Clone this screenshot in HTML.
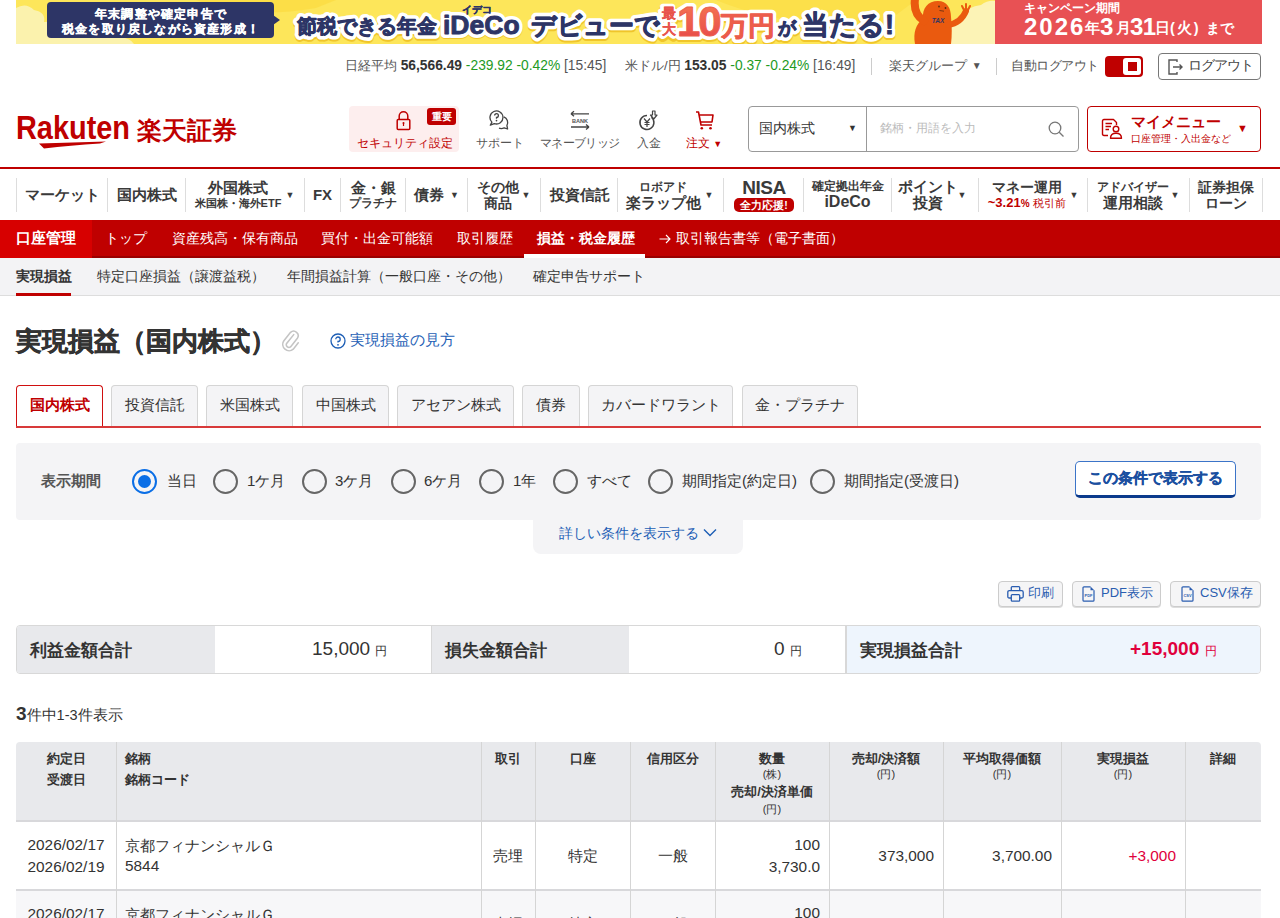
<!DOCTYPE html>
<html lang="ja"><head><meta charset="utf-8">
<style>
*{box-sizing:border-box;margin:0;padding:0}
html,body{width:1280px;height:918px;overflow:hidden;background:#fff}
body{font-family:"Liberation Sans",sans-serif;color:#333;position:relative}
.a{position:absolute;white-space:nowrap}
/* banner */
#banner{left:16px;top:0;width:979px;height:44px;background:#fde54b;overflow:hidden}
#campaign{left:995px;top:0;width:267px;height:44px;background:#e85154;color:#fff}
/* top row */
.tr{font-size:13px;color:#555;top:57px;line-height:18px}
.n{font-size:13.8px}
.grn{color:#239a1f}
.sep{background:#ccc;width:1px}
/* header */
.hicon{top:106px;height:46px;text-align:center;font-size:12px;color:#555}
#nav .it{position:absolute;top:178px;height:34px;display:flex;align-items:center;justify-content:center;text-align:center;color:#3a3a3a;font-weight:bold;font-size:15px;line-height:16px}
#nav .s{position:absolute;top:178px;height:34px;width:1px;background:#ddd}
.tri{font-size:9px;margin-left:6px;font-weight:normal}
.rb{top:220px;height:38px;background:#bf0000;left:0;width:1280px}
.rbt{top:219px;height:38px;line-height:38px;color:#fff;font-size:14px}
.sub{top:257px;height:38px;line-height:38px;font-size:14px;color:#333}
.tab{top:385px;height:41px;border:1px solid #d5d5d5;border-bottom:none;border-radius:4px 4px 0 0;background:#f4f4f6;font-size:15px;line-height:38px;text-align:center;color:#333}
.radio{width:25px;height:25px;border:2.5px solid #666;border-radius:50%;top:469px}
.rl{top:472px;font-size:15px;line-height:18px;color:#333}
.btn{top:581px;height:26px;border:1px solid #ccc;border-radius:4px;background:#f5f5f6;color:#2a5db0;font-size:13px;line-height:24px;box-shadow:0 1px 0 #ddd}
.th{font-size:13px;font-weight:bold;color:#333;line-height:21px;text-align:center}
.td{font-size:15.4px;color:#333;line-height:21px}
.vl{width:1px;background:#d5d5d5}
</style></head><body>

<!-- BANNER -->
<svg class="a" style="left:16px;top:0" width="979" height="44" viewBox="0 0 979 44">
  <defs>
    <linearGradient id="rg" x1="0" y1="0" x2="0" y2="1"><stop offset="0" stop-color="#f77a52"/><stop offset="1" stop-color="#e5454a"/></linearGradient>
  </defs>
  <rect width="979" height="44" fill="#fde65a"/>
  <path d="M180 0 Q230 20 300 8 L320 0 Z" fill="#fcd93a" opacity="0.6"/>
  <path d="M700 0 Q760 25 860 30 L900 0 Z" fill="#fcd93a" opacity="0.5"/>
  <path d="M0 8 Q10 2 18 10 Q30 12 28 22 Q50 20 60 30 Q90 26 100 36 Q115 38 118 44 L0 44 Z" fill="#fbf2ad"/>
  <path d="M925 44 Q930 20 945 17 Q952 6 965 5 Q972 0 979 1 L979 44 Z" fill="#fcf3b6"/>
  <rect x="31" y="2" width="227" height="36" rx="4" fill="#2d3566"/>
  <path d="M257 15 L264 20 L257 25 Z" fill="#2d3566"/>
  <g font-family="Liberation Sans" font-weight="bold" fill="#fff" stroke="#fff" stroke-width="0.3" text-anchor="middle" font-size="12" letter-spacing="1.2">
    <text x="145" y="17.5">年末調整や確定申告で</text>
    <text x="145" y="33">税金を取り戻しながら資産形成！</text>
  </g>
  <g font-family="Liberation Sans" font-weight="bold" stroke-linejoin="round">
<text x="281" y="34.8" font-size="19.5" fill="#f0c52a" stroke="#f0c52a" stroke-width="8">節税できる年金</text>
<text x="427" y="35.3" font-size="26.5" fill="#f0c52a" stroke="#f0c52a" stroke-width="8">iDeCo</text>
<text x="515" y="35.8" font-size="25" fill="#f0c52a" stroke="#f0c52a" stroke-width="8">デビューで</text>
<text x="645" y="19.8" font-size="13.5" fill="#f0c52a" stroke="#f0c52a" stroke-width="8">最</text>
<text x="645" y="35.8" font-size="13.5" fill="#f0c52a" stroke="#f0c52a" stroke-width="8">大</text>
<text x="661" y="37.8" font-size="42" fill="#f0c52a" stroke="#f0c52a" stroke-width="8" letter-spacing="-2">10</text>
<text x="705" y="36.8" font-size="27" fill="#f0c52a" stroke="#f0c52a" stroke-width="8">万円</text>
<text x="762" y="35.8" font-size="18" fill="#f0c52a" stroke="#f0c52a" stroke-width="8">が</text>
<text x="786" y="35.8" font-size="27" fill="#f0c52a" stroke="#f0c52a" stroke-width="8">当たる!</text>
<text x="281" y="33" font-size="19.5" fill="#fff" stroke="#fff" stroke-width="8">節税できる年金</text>
<text x="427" y="33.5" font-size="26.5" fill="#fff" stroke="#fff" stroke-width="8">iDeCo</text>
<text x="515" y="34" font-size="25" fill="#fff" stroke="#fff" stroke-width="8">デビューで</text>
<text x="645" y="18" font-size="13.5" fill="#fff" stroke="#fff" stroke-width="6">最</text>
<text x="645" y="34" font-size="13.5" fill="#fff" stroke="#fff" stroke-width="6">大</text>
<text x="661" y="36" font-size="42" fill="#fff" stroke="#fff" stroke-width="8" letter-spacing="-2">10</text>
<text x="705" y="35" font-size="27" fill="#fff" stroke="#fff" stroke-width="8">万円</text>
<text x="762" y="34" font-size="18" fill="#fff" stroke="#fff" stroke-width="8">が</text>
<text x="786" y="34" font-size="27" fill="#fff" stroke="#fff" stroke-width="8">当たる!</text>
<text x="281" y="33" font-size="19.5" fill="#2d3566" stroke="#2d3566" stroke-width="0.9">節税できる年金</text>
<text x="427" y="33.5" font-size="26.5" fill="#2d3566" stroke="#2d3566" stroke-width="0.9">iDeCo</text>
<text x="515" y="34" font-size="25" fill="#2d3566" stroke="#2d3566" stroke-width="0.9">デビューで</text>
<text x="645.5" y="18" font-size="13.5" fill="#e8544c" stroke="#e8544c" stroke-width="0.3">最</text>
<text x="645.5" y="34" font-size="13.5" fill="#e8544c" stroke="#e8544c" stroke-width="0.3">大</text>
<text x="661" y="36" font-size="42" fill="url(#rg)" stroke="#ec5d4c" stroke-width="0.9" letter-spacing="-2">10</text>
<text x="705" y="35" font-size="27" fill="url(#rg)" stroke="#ec5d4c" stroke-width="0.9">万円</text>
<text x="762" y="34" font-size="18" fill="#2d3566" stroke="#2d3566" stroke-width="0.9">が</text>
<text x="786" y="34" font-size="27" fill="#2d3566" stroke="#2d3566" stroke-width="0.9">当たる!</text>
<text x="446" y="12.5" font-size="10" fill="#2d3566" stroke="#2d3566" stroke-width="0.4">イデコ</text>
</g>
  <path d="M899 44 C897 32 900 24 907 19 C906 8 912 1 922 1 C931 1 935 8 935 17 C936 26 936 36 935 44 Z" fill="#ea5a0f"/>
  <path d="M908 21 Q897 14 899 -1" fill="none" stroke="#ea5a0f" stroke-width="8" stroke-linecap="round"/>
  <path d="M932 25 Q945 23 950 11" fill="none" stroke="#ea5a0f" stroke-width="6" stroke-linecap="round"/>
  <path d="M948 10 L946 6 M950 9 L950 4 M952 10 L954 6" fill="none" stroke="#ea5a0f" stroke-width="2" stroke-linecap="round"/>
  <circle cx="923" cy="6.5" r="0.9" fill="#5a2a10"/><circle cx="929.5" cy="8" r="0.9" fill="#5a2a10"/><path d="M923.5 10.5 L928 11.2" stroke="#5a2a10" stroke-width="0.8"/>
  <text x="922" y="22.5" font-family="Liberation Sans" font-weight="bold" font-style="italic" font-size="6.5" fill="#2d3566" text-anchor="middle">TAX</text>
</svg>
<div class="a" id="campaign">
  <div class="a" style="left:29px;top:1px;font-size:12px;font-weight:bold;line-height:14px">キャンペーン期間</div>
  <div class="a" style="left:29px;top:14px;font-size:24px;font-weight:bold;line-height:26px;letter-spacing:2px">2026</div>
  <div class="a" style="left:90px;top:19px;font-size:14.5px;font-weight:bold;line-height:18px">年</div>
  <div class="a" style="left:105px;top:14px;font-size:24px;font-weight:bold;line-height:26px">3</div>
  <div class="a" style="left:121px;top:19px;font-size:14.5px;font-weight:bold;line-height:18px">月</div>
  <div class="a" style="left:135px;top:14px;font-size:24px;font-weight:bold;line-height:26px;letter-spacing:-0.5px">31</div>
  <div class="a" style="left:160px;top:19px;font-size:14.5px;font-weight:bold;line-height:18px">日</div>
  <div class="a" style="left:175px;top:19px;font-size:14.5px;font-weight:bold;line-height:18px;letter-spacing:2px">(火)</div>
  <div class="a" style="left:211px;top:19px;font-size:14px;font-weight:bold;line-height:18px">まで</div>
</div>

<!-- TOP ROW -->
<div class="a tr" style="left:345px">日経平均 <span class="n"><b style="color:#333">56,566.49</b> <span class="grn">-239.92 -0.42%</span> [15:45]</span></div>
<div class="a tr" style="left:625px">米ドル/円 <span class="n"><b style="color:#333">153.05</b> <span class="grn">-0.37 -0.24%</span> [16:49]</span></div>
<div class="a sep" style="left:871px;top:58px;height:17px"></div>
<div class="a tr" style="left:889px">楽天グループ <span style="font-size:10px;margin-left:1px;vertical-align:1px">▼</span></div>
<div class="a sep" style="left:996px;top:58px;height:17px"></div>
<div class="a tr" style="left:1011px;letter-spacing:-0.5px">自動ログアウト</div>
<div class="a" style="left:1105px;top:56px;width:38px;height:21px;background:#bf0000;border-radius:4px"></div>
<div class="a" style="left:1123px;top:58px;width:18px;height:17px;background:#fff;border-radius:3px"></div>
<div class="a" style="left:1128px;top:62px;width:9px;height:9px;background:#bf0000"></div>
<div class="a" style="left:1158px;top:53px;width:103px;height:27px;border:1px solid #777;border-radius:4px"></div>
<svg class="a" style="left:1167px;top:58px" width="18" height="18" viewBox="0 0 18 18"><path d="M10 4 V2 H2 V16 H10 V14" fill="none" stroke="#555" stroke-width="1.4"/><path d="M6 9 H15 M12.5 6.5 L15 9 L12.5 11.5" fill="none" stroke="#555" stroke-width="1.4"/></svg>
<div class="a tr" style="left:1188px;color:#444;font-size:13.5px;letter-spacing:-1px">ログアウト</div>


<!-- HEADER -->
<svg class="a" style="left:0;top:100px" width="250" height="55" viewBox="0 0 250 55"><text x="16" y="39" font-family="Liberation Sans" font-weight="bold" font-size="33" fill="#bf0000" textLength="114" lengthAdjust="spacingAndGlyphs">Rakuten</text><path d="M39 43.5 L106 41.5 L100 43.5 Q70 45.5 44 48.5 Z" fill="#bf0000"/><text x="137" y="38.5" font-family="Liberation Sans" font-weight="bold" font-size="25" fill="#bf0000">楽天証券</text></svg>
<div class="a" style="left:349px;top:106px;width:110px;height:46px;background:#fdeeee;border-radius:4px"></div>
<div class="a" style="left:427px;top:108px;width:29px;height:17px;background:#bf0000;border-radius:3px;color:#fff;font-size:10px;font-weight:bold;line-height:17px;text-align:center">重要</div>
<svg class="a" style="left:396px;top:110px" width="16" height="21" viewBox="0 0 16 21"><path d="M3.2 9.5 V6 A4.3 4.3 0 0 1 11.8 6 V9.5" fill="none" stroke="#bf0000" stroke-width="1.5"/><rect x="1.2" y="9.6" width="12.6" height="9.8" rx="1" fill="none" stroke="#bf0000" stroke-width="1.5"/><circle cx="7.5" cy="13" r="1" fill="#bf0000"/><path d="M7.5 13 V16" stroke="#bf0000" stroke-width="1.2"/></svg>
<div class="a" style="left:357px;top:136px;font-size:12px;color:#bf0000;line-height:14px">セキュリティ設定</div>

<svg class="a" style="left:488px;top:110px" width="22" height="21" viewBox="0 0 22 21"><path d="M3.9 12.1 A6.5 6.5 0 1 1 6.3 13.6 L2.3 15.2 Z" fill="none" stroke="#444" stroke-width="1.3" stroke-linejoin="round"/><path d="M6.6 5.6 A1.9 1.9 0 1 1 8.5 7.5 V8.8" fill="none" stroke="#444" stroke-width="1.3"/><circle cx="8.5" cy="10.6" r="0.85" fill="#444"/><path d="M15.8 6.9 A6 6 0 0 1 18.9 15.5 L19.6 19 L16.2 17.8 A6 6 0 0 1 11 18.2" fill="none" stroke="#444" stroke-width="1.3" stroke-linejoin="round"/></svg>
<div class="a" style="left:476px;top:136px;font-size:12px;color:#555;line-height:14px">サポート</div>

<svg class="a" style="left:569px;top:110px" width="22" height="20" viewBox="0 0 22 20"><path d="M2 3.8 H20 M2 3.8 L5 1.3 M2 3.8 L5 6.3 M2 17 H20 M20 17 L17 14.5 M20 17 L17 19.5" fill="none" stroke="#444" stroke-width="1.3"/><text x="11" y="12.8" font-size="5.6" font-weight="bold" text-anchor="middle" fill="#555" font-family="Liberation Sans">BANK</text></svg>
<div class="a" style="left:540px;top:136px;font-size:12px;color:#555;line-height:14px;letter-spacing:-0.7px">マネーブリッジ</div>

<svg class="a" style="left:638px;top:110px" width="22" height="22" viewBox="0 0 22 22"><path d="M13.5 7.2 A7 7 0 1 1 9 5.5" fill="none" stroke="#444" stroke-width="1.5"/><path d="M6 8.5 L9 12 L12 8.5 M9 12 V17 M6.5 12.5 H11.5 M6.5 14.5 H11.5" fill="none" stroke="#444" stroke-width="1.2"/><path d="M14.5 1 H17 V5 H19 L15.75 9 L12.5 5 H14.5 Z" fill="none" stroke="#444" stroke-width="1.2" stroke-linejoin="round"/></svg>
<div class="a" style="left:637px;top:136px;font-size:12px;color:#555;line-height:14px">入金</div>

<svg class="a" style="left:695px;top:110px" width="20" height="21" viewBox="0 0 20 21"><path d="M1 2 H3.5 L6 15 H17" fill="none" stroke="#bf0000" stroke-width="1.6" stroke-linejoin="round"/><path d="M4.3 5 H18 L17 12 H5.5" fill="none" stroke="#bf0000" stroke-width="1.6" stroke-linejoin="round"/><circle cx="6.8" cy="18.3" r="1.3" fill="#bf0000"/><circle cx="15.5" cy="18.3" r="1.3" fill="#bf0000"/></svg>
<div class="a" style="left:686px;top:136px;font-size:12px;color:#bf0000;line-height:14px">注文 <span style="font-size:9px">▼</span></div>

<div class="a" style="left:748px;top:106px;width:331px;height:46px;border:1px solid #999;border-radius:4px"></div>
<div class="a" style="left:866px;top:107px;width:1px;height:44px;background:#999"></div>
<div class="a" style="left:759px;top:120px;font-size:14px;color:#333;line-height:17px">国内株式</div>
<div class="a" style="left:848px;top:121px;font-size:9px;color:#333;line-height:15px">▼</div>
<div class="a" style="left:880px;top:121px;font-size:12px;color:#bbb;line-height:15px">銘柄・用語を入力</div>
<svg class="a" style="left:1048px;top:121px" width="17" height="17" viewBox="0 0 17 17"><circle cx="7" cy="7" r="5.8" fill="none" stroke="#777" stroke-width="1.3"/><path d="M11.2 11.2 L15.5 15.5" stroke="#777" stroke-width="1.3"/></svg>

<div class="a" style="left:1087px;top:106px;width:174px;height:46px;border:1.5px solid #bf0000;border-radius:4px"></div>
<svg class="a" style="left:1101px;top:118px" width="24" height="22" viewBox="0 0 24 22"><path d="M7 17.5 H3 Q1.5 17.5 1.5 16 V3 Q1.5 1.5 3 1.5 H12.5 L15.5 4.5 V7" fill="none" stroke="#bf0000" stroke-width="1.4" stroke-linejoin="round"/><path d="M4.5 5.5 H11 M4.5 8.5 H10 M4.5 11.5 H8" stroke="#bf0000" stroke-width="1.4"/><circle cx="15" cy="11" r="2.8" fill="none" stroke="#bf0000" stroke-width="1.4"/><path d="M9.5 20.3 Q9.5 15.2 15 15.2 Q20.5 15.2 20.5 20.3 Z" fill="none" stroke="#bf0000" stroke-width="1.4" stroke-linejoin="round"/></svg>
<div class="a" style="left:1131px;top:113px;font-size:15px;font-weight:bold;color:#bf0000;line-height:18px">マイメニュー</div>
<div class="a" style="left:1131px;top:132px;font-size:10.2px;color:#bf0000;line-height:13px">口座管理・入出金など</div>
<div class="a" style="left:1237px;top:122px;font-size:11px;color:#bf0000;line-height:13px">▼</div>

<div class="a" style="left:0;top:167px;width:1280px;height:2px;background:#bf0000"></div>


<!-- NAV -->
<div id="nav">
<div class="s" style="left:16px"></div>
<div class="it" style="left:17px;width:90px">マーケット</div>
<div class="s" style="left:107px"></div>
<div class="it" style="left:108px;width:77px">国内株式</div>
<div class="s" style="left:185px"></div>
<div class="it" style="left:186px;width:104px;flex-direction:column;font-size:14.5px;line-height:16px">外国株式<span style="font-size:11px;line-height:15px">米国株・海外ETF</span></div><div class="it" style="left:284px;width:12px;font-size:9px;font-weight:normal">▼</div>
<div class="s" style="left:304px"></div>
<div class="it" style="left:305px;width:35px">FX</div>
<div class="s" style="left:340px"></div>
<div class="it" style="left:341px;width:64px;flex-direction:column;font-size:14.5px;line-height:16px">金・銀<span style="font-size:12px;line-height:15px">プラチナ</span></div>
<div class="s" style="left:405px"></div>
<div class="it" style="left:406px;width:61px">債券<span class="tri">▼</span></div>
<div class="s" style="left:467px"></div>
<div class="it" style="left:468px;width:60px;flex-direction:column;font-size:14px">その他<span>商品</span></div><div class="it" style="left:520px;width:12px;font-size:9px;font-weight:normal">▼</div>
<div class="s" style="left:540px"></div>
<div class="it" style="left:541px;width:77px">投資信託</div>
<div class="s" style="left:617px"></div>
<div class="it" style="left:618px;width:90px;flex-direction:column;font-size:15px;line-height:17px"><span style="font-size:12px;line-height:14px">ロボアド</span>楽ラップ他</div><div class="it" style="left:703px;width:12px;font-size:9px;font-weight:normal">▼</div>
<div class="s" style="left:723px"></div>
<div class="it" style="left:724px;width:80px;flex-direction:column"><span style="font-size:19px;line-height:19px;letter-spacing:-0.5px">NISA</span><span style="font-size:10.5px;line-height:14px;background:#bf0000;color:#fff;border-radius:5px;padding:0 6px;margin-top:1px">全力応援!</span></div>
<div class="s" style="left:803px"></div>
<div class="it" style="left:804px;width:87px;flex-direction:column;font-size:16px;line-height:18px"><span style="font-size:12px;line-height:14px">確定拠出年金</span>iDeCo</div>
<div class="s" style="left:891px"></div>
<div class="it" style="left:892px;width:72px;flex-direction:column;font-size:15px;line-height:16px">ポイント<span>投資</span></div><div class="it" style="left:956px;width:12px;font-size:9px;font-weight:normal">▼</div>
<div class="s" style="left:978px"></div>
<div class="it" style="left:979px;width:96px;flex-direction:column;font-size:14px;line-height:16px">マネー運用<span style="color:#bf0000;font-size:13px;line-height:16px">~3.21<span style="font-size:10px">%</span> <span style="font-size:11px;font-weight:normal">税引前</span></span></div><div class="it" style="left:1068px;width:12px;font-size:9px;font-weight:normal">▼</div>
<div class="s" style="left:1087px"></div>
<div class="it" style="left:1088px;width:90px;flex-direction:column;font-size:15px;line-height:17px"><span style="font-size:12px;line-height:14px">アドバイザー</span>運用相談</div><div class="it" style="left:1169px;width:12px;font-size:9px;font-weight:normal">▼</div>
<div class="s" style="left:1189px"></div>
<div class="it" style="left:1190px;width:72px;flex-direction:column;font-size:14px;line-height:16px">証券担保<span>ローン</span></div>
<div class="s" style="left:1262px"></div>
</div>

<!-- RED BAR -->
<div class="a rb"></div>
<div class="a" style="left:92px;top:256px;width:1188px;height:2px;background:#9a0000"></div>
<div class="a" style="left:0;top:220px;width:92px;height:38px;background:#d70000"></div>
<div class="a rbt" style="left:16px;font-weight:bold;font-size:15px">口座管理</div>
<div class="a rbt" style="left:105px">トップ</div>
<div class="a rbt" style="left:172px">資産残高・保有商品</div>
<div class="a rbt" style="left:321px">買付・出金可能額</div>
<div class="a rbt" style="left:457px">取引履歴</div>
<div class="a rbt" style="left:537px;font-weight:bold">損益・税金履歴</div>
<div class="a" style="left:524px;top:254px;width:121px;height:4px;background:#fff"></div>
<svg class="a" style="left:659px;top:234px" width="12" height="10" viewBox="0 0 12 10"><path d="M0.5 5 H11 M7 1 L11 5 L7 9" fill="none" stroke="#fff" stroke-width="1.1"/></svg>
<div class="a rbt" style="left:676px">取引報告書等（電子書面）</div>

<!-- SUB NAV -->
<div class="a" style="left:0;top:258px;width:1280px;height:38px;background:#f3f3f5;border-bottom:1px solid #ddd"></div>
<div class="a sub" style="left:16px;font-weight:bold">実現損益</div>
<div class="a" style="left:16px;top:293px;width:55px;height:3px;background:#bf0000"></div>
<div class="a sub" style="left:97px">特定口座損益（譲渡益税）</div>
<div class="a sub" style="left:287px">年間損益計算（一般口座・その他）</div>
<div class="a sub" style="left:533px">確定申告サポート</div>


<!-- TITLE -->
<div class="a" style="left:16px;top:325px;font-size:26px;font-weight:bold;color:#333;line-height:32px;-webkit-text-stroke:0.5px #333">実現損益（国内株式）</div>
<svg class="a" style="left:281px;top:330px" width="20" height="22" viewBox="0 0 22 24"><path d="M14 5 L6 15 A3 3 0 0 0 10.5 18.5 L18 9 A5 5 0 0 0 10.5 2.5 L3 12 A7 7 0 0 0 13.5 21 L19 14" fill="none" stroke="#c4c4c4" stroke-width="1.7" stroke-linecap="round"/></svg>
<svg class="a" style="left:330px;top:333px" width="16" height="16" viewBox="0 0 16 16"><circle cx="8" cy="8" r="7" fill="none" stroke="#1d5eb5" stroke-width="1.3"/><path d="M5.8 6.2 A2.2 2.2 0 1 1 8 8.4 V9.6" fill="none" stroke="#1d5eb5" stroke-width="1.3"/><circle cx="8" cy="11.8" r="0.9" fill="#1d5eb5"/></svg>
<div class="a" style="left:350px;top:331px;font-size:15px;color:#1d5eb5;line-height:18px">実現損益の見方</div>

<!-- TABS -->
<div class="a tab" style="left:16px;width:87px;background:#fff;border:1px solid #d01010;border-bottom:none;color:#bf0000;font-weight:bold;height:41px">国内株式</div>
<div class="a tab" style="left:111px;width:87px">投資信託</div>
<div class="a tab" style="left:206px;width:87px">米国株式</div>
<div class="a tab" style="left:302px;width:87px">中国株式</div>
<div class="a tab" style="left:397px;width:117px">アセアン株式</div>
<div class="a tab" style="left:522px;width:58px">債券</div>
<div class="a tab" style="left:588px;width:145px">カバードワラント</div>
<div class="a tab" style="left:742px;width:116px">金・プラチナ</div>
<div class="a" style="left:16px;top:426px;width:1245px;height:1.5px;background:#d83a3a;z-index:1"></div>

<!-- FILTER -->
<div class="a" style="left:16px;top:443px;width:1245px;height:77px;background:#f4f4f6;border-radius:4px"></div>
<div class="a" style="left:533px;top:519px;width:210px;height:35px;background:#f4f4f6;border-radius:0 0 8px 8px"></div>
<div class="a" style="left:41px;top:473px;font-size:14.6px;font-weight:bold;color:#555;line-height:17px">表示期間</div>
<div class="a radio" style="left:132px;border-color:#0a6ee6"><div style="position:absolute;left:3.5px;top:3.5px;width:13px;height:13px;border-radius:50%;background:#0a6ee6"></div></div>
<div class="a rl" style="left:167px">当日</div>
<div class="a radio" style="left:213px"></div>
<div class="a rl" style="left:247px">1ケ月</div>
<div class="a radio" style="left:302px"></div>
<div class="a rl" style="left:335px">3ケ月</div>
<div class="a radio" style="left:391px"></div>
<div class="a rl" style="left:424px">6ケ月</div>
<div class="a radio" style="left:479px"></div>
<div class="a rl" style="left:513px">1年</div>
<div class="a radio" style="left:553px"></div>
<div class="a rl" style="left:587px">すべて</div>
<div class="a radio" style="left:648px"></div>
<div class="a rl" style="left:682px">期間指定(約定日)</div>
<div class="a radio" style="left:810px"></div>
<div class="a rl" style="left:844px">期間指定(受渡日)</div>
<div class="a" style="left:1075px;top:461px;width:161px;height:37px;background:#fff;border:1.5px solid #3b74c8;border-bottom:3px solid #0b3a8c;border-radius:5px;color:#1a4fa0;font-weight:bold;font-size:15px;line-height:31px;text-align:center;-webkit-text-stroke:0.3px #1a4fa0">この条件で表示する</div>
<div class="a" style="left:559px;top:525px;font-size:14px;color:#1d5eb5;line-height:17px">詳しい条件を表示する</div>
<svg class="a" style="left:703px;top:528px" width="14" height="9" viewBox="0 0 14 9"><path d="M1 1.5 L7 7.5 L13 1.5" fill="none" stroke="#1d5eb5" stroke-width="1.4"/></svg>

<!-- BUTTONS -->
<div class="a btn" style="left:998px;width:65px"></div>
<svg class="a" style="left:1007px;top:586px" width="17" height="16" viewBox="0 0 17 16"><path d="M4.3 4.5 V1.6 Q4.3 0.7 5.2 0.7 H11.8 Q12.7 0.7 12.7 1.6 V4.5" fill="none" stroke="#2a5db0" stroke-width="1.3"/><path d="M4 12 H2.3 Q0.8 12 0.8 10.5 V6.2 Q0.8 4.7 2.3 4.7 H14.7 Q16.2 4.7 16.2 6.2 V10.5 Q16.2 12 14.7 12 H13" fill="none" stroke="#2a5db0" stroke-width="1.3"/><rect x="4.3" y="8.6" width="8.4" height="6.6" rx="1" fill="none" stroke="#2a5db0" stroke-width="1.3"/></svg>
<div class="a" style="left:1028px;top:585px;font-size:13px;color:#2a5db0;line-height:16px">印刷</div>
<div class="a btn" style="left:1072px;width:89px"></div>
<svg class="a" style="left:1082px;top:586px" width="13" height="16" viewBox="0 0 13 16"><path d="M8.5 0.8 H2 Q1 0.8 1 1.8 V14.2 Q1 15.2 2 15.2 H11 Q12 15.2 12 14.2 V4.3" fill="none" stroke="#2a5db0" stroke-width="1.2"/><path d="M8.5 0.5 L12.3 4.3 H8.5 Z" fill="#2a5db0"/><text x="6.5" y="10.8" font-size="4" font-weight="bold" text-anchor="middle" fill="#2a5db0" font-family="Liberation Sans">PDF</text></svg>
<div class="a" style="left:1101px;top:585px;font-size:13px;color:#2a5db0;line-height:16px">PDF表示</div>
<div class="a btn" style="left:1170px;width:91px"></div>
<svg class="a" style="left:1181px;top:586px" width="13" height="16" viewBox="0 0 13 16"><path d="M8.5 0.8 H2 Q1 0.8 1 1.8 V14.2 Q1 15.2 2 15.2 H11 Q12 15.2 12 14.2 V4.3" fill="none" stroke="#2a5db0" stroke-width="1.2"/><path d="M8.5 0.5 L12.3 4.3 H8.5 Z" fill="#2a5db0"/><text x="6.5" y="10.8" font-size="4" font-weight="bold" text-anchor="middle" fill="#2a5db0" font-family="Liberation Sans">CSV</text></svg>
<div class="a" style="left:1200px;top:585px;font-size:13px;color:#2a5db0;line-height:16px">CSV保存</div>

<!-- SUMMARY -->
<div class="a" style="left:16px;top:625px;width:1245px;height:49px;border:1px solid #d8d8d8;border-radius:4px;overflow:hidden;background:#fff">
  <div class="a" style="left:0;top:0;width:198px;height:47px;background:#e8e9ec"></div>
  <div class="a" style="left:414px;top:0;width:1px;height:47px;background:#d8d8d8"></div>
  <div class="a" style="left:415px;top:0;width:197px;height:47px;background:#e8e9ec"></div>
  <div class="a" style="left:828px;top:0;width:2px;height:47px;background:#d8d8d8"></div>
  <div class="a" style="left:830px;top:0;width:415px;height:47px;background:#eef5fd"></div>
</div>
<div class="a" style="left:30px;top:641px;font-size:16.7px;font-weight:bold;color:#333;line-height:19px">利益金額合計</div>
<div class="a" style="left:312px;top:638px;font-size:19px;color:#333;line-height:22px">15,000 <span style="font-size:12px">円</span></div>
<div class="a" style="left:445px;top:641px;font-size:16.7px;font-weight:bold;color:#333;line-height:19px">損失金額合計</div>
<div class="a" style="left:774px;top:638px;font-size:19px;color:#333;line-height:22px">0 <span style="font-size:12px">円</span></div>
<div class="a" style="left:860px;top:641px;font-size:16.7px;font-weight:bold;color:#333;line-height:19px">実現損益合計</div>
<div class="a" style="left:1130px;top:638px;font-size:19px;font-weight:bold;color:#e0003c;line-height:22px">+15,000 <span style="font-size:12px;font-weight:normal">円</span></div>

<div class="a" style="left:16px;top:704px;font-size:14.5px;color:#333;line-height:20px"><b style="font-size:19px">3</b>件中1-3件表示</div>

<!-- TABLE -->
<div class="a" style="left:16px;top:742px;width:1245px;height:190px;border-radius:4px 4px 0 0;overflow:hidden">
  <div class="a" style="left:0;top:0;width:1245px;height:78px;background:#e8e9ec"></div>
  <div class="a" style="left:0;top:78px;width:1245px;height:2px;background:#d8d8db"></div>
  <div class="a" style="left:0;top:80px;width:1245px;height:67px;background:#fff"></div>
  <div class="a" style="left:0;top:147px;width:1245px;height:2px;background:#d8d8db"></div>
  <div class="a" style="left:0;top:149px;width:1245px;height:60px;background:#f7f7f9"></div>
  <div class="a vl" style="left:100px;top:0;height:200px"></div>
  <div class="a vl" style="left:465px;top:0;height:200px"></div>
  <div class="a vl" style="left:519px;top:0;height:200px"></div>
  <div class="a vl" style="left:614px;top:0;height:200px"></div>
  <div class="a vl" style="left:699px;top:0;height:200px"></div>
  <div class="a vl" style="left:813px;top:0;height:200px"></div>
  <div class="a vl" style="left:927px;top:0;height:200px"></div>
  <div class="a vl" style="left:1045px;top:0;height:200px"></div>
  <div class="a vl" style="left:1169px;top:0;height:200px"></div>
</div>
<div class="a th" style="left:16px;top:748px;width:100px">約定日<br>受渡日</div>
<div class="a th" style="left:125px;top:748px;text-align:left">銘柄<br>銘柄コード</div>
<div class="a th" style="left:481px;top:748px;width:54px">取引</div>
<div class="a th" style="left:535px;top:748px;width:95px">口座</div>
<div class="a th" style="left:630px;top:748px;width:85px">信用区分</div>
<div class="a th" style="left:715px;top:751px;width:114px;line-height:15px">数量<br><span style="font-weight:normal;font-size:11px">(株)</span><br><span style="line-height:19px">売却/決済単価</span><br><span style="font-weight:normal;font-size:11px">(円)</span></div>
<div class="a th" style="left:829px;top:751px;width:114px;line-height:15px">売却/決済額<br><span style="font-weight:normal;font-size:11px">(円)</span></div>
<div class="a th" style="left:943px;top:751px;width:118px;line-height:15px">平均取得価額<br><span style="font-weight:normal;font-size:11px">(円)</span></div>
<div class="a th" style="left:1061px;top:751px;width:124px;line-height:15px">実現損益<br><span style="font-weight:normal;font-size:11px">(円)</span></div>
<div class="a th" style="left:1185px;top:748px;width:76px">詳細</div>

<div class="a td" style="left:16px;top:834px;width:100px;text-align:center;line-height:22px">2026/02/17<br>2026/02/19</div>
<div class="a td" style="left:125px;top:836px;line-height:20px">京都フィナンシャルＧ<br>5844</div>
<div class="a td" style="left:481px;top:845px;width:54px;text-align:center">売埋</div>
<div class="a td" style="left:535px;top:845px;width:95px;text-align:center">特定</div>
<div class="a td" style="left:630px;top:845px;width:85px;text-align:center">一般</div>
<div class="a td" style="left:715px;top:834px;width:105px;text-align:right;line-height:22px">100<br>3,730.0</div>
<div class="a td" style="left:829px;top:845px;width:105px;text-align:right">373,000</div>
<div class="a td" style="left:943px;top:845px;width:109px;text-align:right">3,700.00</div>
<div class="a td" style="left:1061px;top:845px;width:115px;text-align:right;color:#e0003c">+3,000</div>

<div class="a td" style="left:16px;top:903px;width:100px;text-align:center;line-height:22px">2026/02/17<br>2026/02/19</div>
<div class="a td" style="left:125px;top:905px;line-height:20px">京都フィナンシャルＧ<br>5844</div>
<div class="a td" style="left:481px;top:913px;width:54px;text-align:center">売埋</div>
<div class="a td" style="left:535px;top:913px;width:95px;text-align:center">特定</div>
<div class="a td" style="left:630px;top:913px;width:85px;text-align:center">一般</div>
<div class="a td" style="left:715px;top:902px;width:105px;text-align:right;line-height:22px">100<br>3,730.0</div>

</body></html>
